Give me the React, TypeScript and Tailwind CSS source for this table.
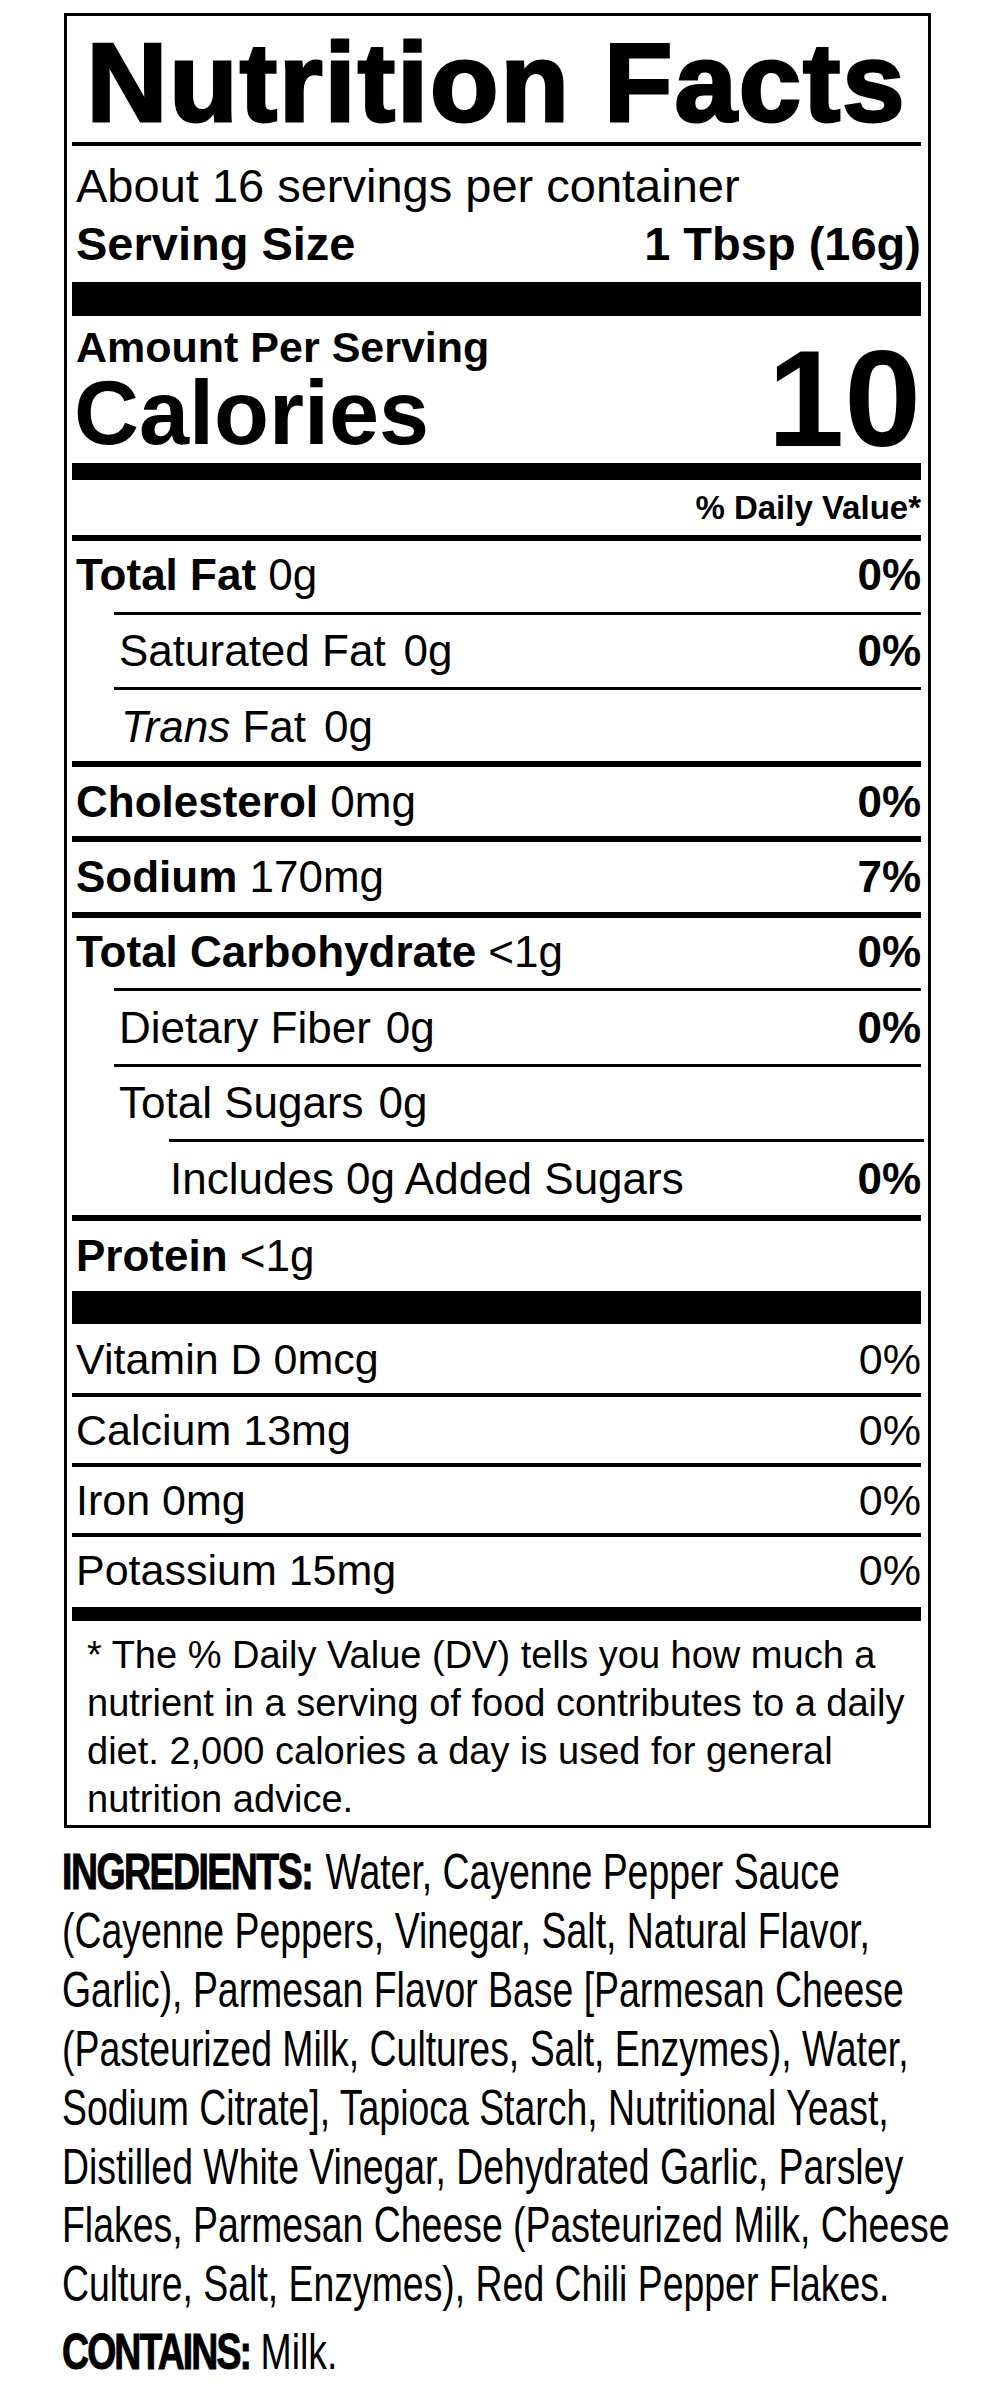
export default function App() {
  return (
    <div className="min-h-[2400px] bg-white text-black font-['Liberation_Sans',Arial,sans-serif]">
      <div className="pl-[64px] pt-[13px]">
        <div className="w-[867px] border-[3px] border-black pl-[5px] pr-[7px]">
          <div className="h-[126px] pt-[8px] text-center text-[112px] leading-[118px] font-bold tracking-[2px] whitespace-nowrap [-webkit-text-stroke:3px_black]">
            Nutrition Facts
          </div>
          <div className="h-[4px] bg-black" />
          <div className="h-[79px] pl-[4px] text-[47px] leading-[79px]">About 16 servings per container</div>
          <div className="h-[57px] pb-[20px] pl-[4px] flex justify-between text-[47px] leading-[37px] font-bold">
            <span>Serving Size</span>
            <span>1 Tbsp (16g)</span>
          </div>
          <div className="h-[34px] bg-black" />
          <div className="flex justify-between h-[147px]">
            <div className="pl-[2px]">
              <div className="h-[62px] pl-[2px] text-[43px] leading-[62px] font-bold">Amount Per Serving</div>
              <div className="h-[85px] pb-[15px] text-[90px] leading-[70px] font-bold">Calories</div>
            </div>
            <div className="pt-[17px] text-[138px] leading-[130px] font-bold">10</div>
          </div>
          <div className="h-[17px] bg-black" />
          <div className="h-[55px] text-right text-[33px] leading-[55px] font-bold">% Daily Value*</div>
          <div className="h-[6px] bg-black" />

          <div className="h-[71px] pb-[3px] pl-[4px] flex justify-between text-[44px] leading-[68px]">
            <span><b>Total Fat</b> 0g</span>
            <b>0%</b>
          </div>
          <div className="ml-[42px] h-[3px] bg-black" />
          <div className="h-[72px] pl-[47px] flex justify-between text-[44px] leading-[72px]">
            <span>Saturated Fat<span className="ml-[18px]">0g</span></span>
            <b>0%</b>
          </div>
          <div className="ml-[42px] h-[3px] bg-black" />
          <div className="h-[71px] pt-[2px] pl-[49px] text-[44px] leading-[69px]">
            <i>Trans</i> Fat<span className="ml-[18px]">0g</span>
          </div>
          <div className="h-[6px] bg-black" />
          <div className="h-[69px] pl-[4px] flex justify-between text-[44px] leading-[69px]">
            <span><b>Cholesterol</b> 0mg</span>
            <b>0%</b>
          </div>
          <div className="h-[6px] bg-black" />
          <div className="h-[70px] pl-[4px] flex justify-between text-[44px] leading-[70px]">
            <span><b>Sodium</b> 170mg</span>
            <b>7%</b>
          </div>
          <div className="h-[6px] bg-black" />
          <div className="h-[70px] pb-[2px] pl-[4px] flex justify-between text-[44px] leading-[68px]">
            <span><b>Total Carbohydrate</b> &lt;1g</span>
            <b>0%</b>
          </div>
          <div className="ml-[42px] h-[3px] bg-black" />
          <div className="h-[73px] pl-[47px] flex justify-between text-[44px] leading-[73px]">
            <span>Dietary Fiber<span className="ml-[15px]">0g</span></span>
            <b>0%</b>
          </div>
          <div className="ml-[42px] h-[3px] bg-black" />
          <div className="h-[72px] pl-[47px] text-[44px] leading-[72px]">
            Total Sugars<span className="ml-[15px]">0g</span>
          </div>
          <div className="ml-[97px] -mr-[3px] h-[3px] bg-black" />
          <div className="h-[73px] pl-[98px] flex justify-between text-[44px] leading-[73px]">
            <span>Includes 0g Added Sugars</span>
            <b>0%</b>
          </div>
          <div className="h-[6px] bg-black" />
          <div className="h-[70px] pl-[4px] text-[44px] leading-[70px]">
            <b>Protein</b> &lt;1g
          </div>
          <div className="h-[33px] bg-black" />

          <div className="h-[69px] pt-[2px] pl-[4px] flex justify-between text-[43px] leading-[67px]">
            <span>Vitamin D 0mcg</span>
            <span>0%</span>
          </div>
          <div className="h-[4px] bg-black" />
          <div className="h-[66px] pl-[4px] flex justify-between text-[43px] leading-[66px]">
            <span>Calcium 13mg</span>
            <span>0%</span>
          </div>
          <div className="h-[4px] bg-black" />
          <div className="h-[66px] pl-[4px] flex justify-between text-[43px] leading-[66px]">
            <span>Iron 0mg</span>
            <span>0%</span>
          </div>
          <div className="h-[4px] bg-black" />
          <div className="h-[70px] pb-[4px] pl-[4px] flex justify-between text-[43px] leading-[66px]">
            <span>Potassium 15mg</span>
            <span>0%</span>
          </div>
          <div className="h-[14px] bg-black" />

          <div className="pt-[10px] pb-[2px] pl-[15px] text-[38px] leading-[48px] whitespace-nowrap">
            <div>* The % Daily Value (DV) tells you how much a</div>
            <div>nutrient in a serving of food contributes to a daily</div>
            <div>diet. 2,000 calories a day is used for general</div>
            <div>nutrition advice.</div>
          </div>
        </div>
      </div>

      <div className="pl-[62px] mt-[15px] w-[997px] overflow-hidden">
        <div className="w-max origin-left scale-x-[0.748] text-[50px] leading-[58.9px] whitespace-nowrap">
          <div>
            <b className="tracking-[-2px] [-webkit-text-stroke:1px_black]">INGREDIENTS:</b>
            <span className="ml-[4px]"> Water, Cayenne Pepper Sauce</span>
          </div>
          <div>(Cayenne Peppers, Vinegar, Salt, Natural Flavor,</div>
          <div>Garlic), Parmesan Flavor Base [Parmesan Cheese</div>
          <div>(Pasteurized Milk, Cultures, Salt, Enzymes), Water,</div>
          <div>Sodium Citrate], Tapioca Starch, Nutritional Yeast,</div>
          <div>Distilled White Vinegar, Dehydrated Garlic, Parsley</div>
          <div>Flakes, Parmesan Cheese (Pasteurized Milk, Cheese</div>
          <div>Culture, Salt, Enzymes), Red Chili Pepper Flakes.</div>
          <div className="mt-[9px]">
            <b className="tracking-[-2.5px] [-webkit-text-stroke:1px_black]">CONTAINS:</b> Milk.
          </div>
        </div>
      </div>
    </div>
  );
}
